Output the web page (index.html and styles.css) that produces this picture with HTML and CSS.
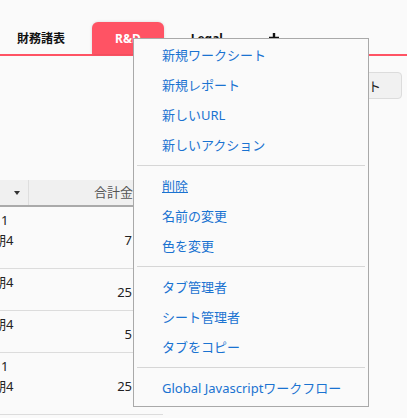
FILE: index.html
```html
<!DOCTYPE html>
<html lang="ja">
<head>
<meta charset="utf-8">
<title>Tabs</title>
<link rel="stylesheet" href="styles.css">
</head>
<body>
<div class="app">
  <nav class="tabs">
    <div class="tab">財務諸表</div>
    <div class="tab active">R&amp;D</div>
    <div class="tab">Legal</div>
    <div class="tab add">
      <svg width="10" height="10" viewBox="0 0 10 10"><path d="M5 0V10M0 5H10" stroke="#111" stroke-width="2.4" fill="none"/></svg>
    </div>
  </nav>

  <div class="toolbar">
    <button class="btn">新規レポート</button>
  </div>

  <div class="grid">
    <div class="hrow">
      <div class="hc c1"><span class="caret"></span></div>
      <div class="hc c2">合計金額</div>
      <div class="hc c3"></div>
    </div>
    <div class="row tall">
      <div class="cell c1"><div class="ln one">1</div><div class="ln shift">四半期4</div></div>
      <div class="num c2">7</div>
      <div class="c3"></div>
    </div>
    <div class="row short">
      <div class="cell c1"><div class="ln shift">四半期4</div></div>
      <div class="num c2">25</div>
      <div class="c3"></div>
    </div>
    <div class="row short">
      <div class="cell c1"><div class="ln shift">四半期4</div></div>
      <div class="num c2">5</div>
      <div class="c3"></div>
    </div>
    <div class="row tall">
      <div class="cell c1"><div class="ln one">1</div><div class="ln shift">四半期4</div></div>
      <div class="num c2">25</div>
      <div class="c3"></div>
    </div>
  </div>

  <div class="menu">
    <div class="item">新規ワークシート</div>
    <div class="item">新規レポート</div>
    <div class="item">新しいURL</div>
    <div class="item">新しいアクション</div>
    <div class="sep"></div>
    <div class="item hover">削除</div>
    <div class="item">名前の変更</div>
    <div class="item">色を変更</div>
    <div class="sep"></div>
    <div class="item">タブ管理者</div>
    <div class="item">シート管理者</div>
    <div class="item">タブをコピー</div>
    <div class="sep"></div>
    <div class="item">Global Javascriptワークフロー</div>
  </div>
</div>
</body>
</html>
```
FILE: styles.css
```css
html, body {
  margin: 0;
  padding: 0;
  background: #fafafa;
}
body {
  font-family: "Noto Sans", "Noto Sans CJK JP", sans-serif;
  width: 407px;
  height: 418px;
  overflow: hidden;
}
.app {
  position: relative;
  height: 418px;
}

/* tabs */
.tabs {
  display: flex;
  align-items: flex-end;
  gap: 15px;
  padding: 22px 0 0 5px;
  border-bottom: 2px solid #ff5364;
}
.tab {
  height: 32px;
  padding: 0 12px;
  display: flex;
  align-items: center;
  font-size: 12px;
  font-weight: 700;
  color: #111;
}
.tab.active {
  background: #ff5364;
  color: #fff;
  padding: 0 23px;
  border-radius: 6px 6px 0 0;
  box-shadow: 0 0 3px rgba(0,0,0,0.15);
}
.tab.add {
  margin-left: 7px;
}

/* toolbar */
.toolbar {
  display: flex;
  justify-content: flex-end;
  padding: 16px 5px 0 0;
}
.btn {
  height: 27px;
  padding: 0 20px;
  border: 1px solid #dcdcdc;
  background: #f1f1f1;
  border-radius: 4px;
  font-family: "Noto Sans", "Noto Sans CJK JP", sans-serif;
  font-size: 13px;
  color: #222;
}

/* grid */
.grid {
  margin-top: 81px;
  width: 163px;
  font-size: 13px;
  color: #222;
}
.hrow {
  display: flex;
  height: 25px;
  background: #f0f0f0;
  border-bottom: 2px solid #aaa;
}
.c1 { width: 29px; flex: none; box-sizing: border-box; }
.c2 { width: 121px; flex: none; box-sizing: border-box; }
.c3 { width: 13px; flex: none; }
.hc.c1 {
  border-right: 1px solid #dedede;
  display: flex;
  align-items: center;
  justify-content: flex-end;
  padding-right: 8px;
}
.caret {
  width: 0;
  height: 0;
  border-left: 3.5px solid transparent;
  border-right: 3.5px solid transparent;
  border-top: 4px solid #333;
}
.hc.c2 {
  text-align: right;
  padding-right: 4px;
  line-height: 25px;
  color: #555;
  white-space: nowrap;
  overflow: hidden;
}
.row {
  display: flex;
  border-bottom: 1px solid #dcdcdc;
}
.row.tall { height: 61px; }
.row.short { height: 41px; }
.cell {
  overflow: hidden;
  padding-top: 3px;
  line-height: 20px;
}
.ln { white-space: nowrap; }
.ln.one { padding-left: 1px; }
.ln.shift { margin-left: -33px; }
.num {
  display: flex;
  align-items: center;
  justify-content: flex-end;
  padding: 4px 18px 0 0;
}

/* context menu */
.menu {
  position: absolute;
  top: 38px;
  left: 133px;
  width: 236px;
  box-sizing: border-box;
  border: 1px solid #a9a9a9;
  background: #fafafa;
  padding: 1px 0 3px;
}
.item {
  height: 30px;
  line-height: 30px;
  padding-left: 28px;
  font-size: 13px;
  color: #1a73d1;
  white-space: nowrap;
}
.item.hover {
  text-decoration: underline;
}
.sep {
  margin: 5px 3px;
  border-top: 1px solid #d6d6d6;
}
```
